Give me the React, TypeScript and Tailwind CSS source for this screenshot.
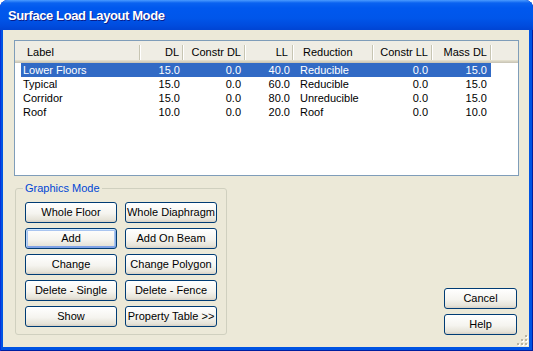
import React from "react";

const rows = [
  ["Lower Floors", "15.0", "0.0", "40.0", "Reducible", "0.0", "15.0"],
  ["Typical", "15.0", "0.0", "60.0", "Reducible", "0.0", "15.0"],
  ["Corridor", "15.0", "0.0", "80.0", "Unreducible", "0.0", "15.0"],
  ["Roof", "10.0", "0.0", "20.0", "Roof", "0.0", "10.0"],
];

const sep =
  "relative after:absolute after:right-0 after:top-[4px] after:bottom-[3px] after:w-px after:bg-[#C7C5B2] after:shadow-[1px_0_0_#ffffff]";

function Btn({ label, focus }: { label: string; focus?: boolean }) {
  return (
    <div
      className={
        "h-[21px] flex items-center justify-center rounded-[3px] border border-[#003C74] text-[11px] text-black whitespace-nowrap bg-[linear-gradient(to_bottom,#FFFFFF,#F5F4EF_55%,#E6E3D8_88%,#D6D0C5)] " +
        (focus
          ? "shadow-[inset_0_1px_0_#CEE7FF,inset_1px_0_0_#BCD4F6,inset_-1px_0_0_#89ADE4,inset_0_-2px_0_#7FA2E6,inset_0_0_0_2px_#A9C5F0]"
          : "")
      }
    >
      {label}
    </div>
  );
}

export default function App() {
  return (
    <div className="w-[533px] h-[351px] bg-white font-['Liberation_Sans',Arial,sans-serif]">
      <div className="w-[533px] h-[351px] flex flex-col rounded-t-[8px] overflow-hidden bg-[#0054E3] shadow-[inset_1px_0_0_#0831D9,inset_-1px_0_0_#001EA0,inset_0_-1px_0_#001EA0]">
        <div className="h-[30px] shrink-0 flex items-center pl-[8px] bg-[linear-gradient(to_bottom,#4A9BFF_0px,#0A62F0_3px,#0058EE_8px,#0056EA_18px,#004BDD_26px,#0044D3_30px)]">
          <span className="text-white font-bold text-[13px] tracking-[-0.4px] [text-shadow:1px_1px_0_#0A1E8C] mt-[1px]">
            Surface Load Layout Mode
          </span>
        </div>
        <div className="flex-1 flex pl-[3px] pr-[4px] pb-[4px]">
          <div className="relative flex-1 bg-[#ECE9D8] flex flex-col pt-[10px] pl-[11px] pr-[10px] pb-[12px]">
            {/* List view */}
            <div className="w-[505px] h-[136px] border border-[#7F9DB9] bg-white text-[11px] text-black overflow-hidden">
              <div className="h-[22px] flex bg-[#EFEDE4] shadow-[inset_0_-1px_0_#CBC7B8,inset_0_-2px_0_#D6D2C2,inset_0_-3px_0_#E2DECD]">
                <div className={"w-[125px] flex items-center pl-[12px] " + sep}>Label</div>
                <div className={"w-[43px] flex items-center justify-end pr-[4px] " + sep}>DL</div>
                <div className={"w-[62px] flex items-center justify-end pr-[4px] " + sep}>Constr DL</div>
                <div className={"w-[48px] flex items-center justify-end pr-[5px] " + sep}>LL</div>
                <div className={"w-[80px] flex items-center pl-[10px] " + sep}>Reduction</div>
                <div className={"w-[59px] flex items-center justify-end pr-[4px] " + sep}>Constr LL</div>
                <div className={"w-[59px] flex items-center justify-end pr-[4px] " + sep}>Mass DL</div>
                <div className="flex-1" />
              </div>
              {rows.map((r, i) => {
                const s = i === 0;
                const cell = s ? "bg-[#316AC5] text-white" : "";
                return (
                  <div key={i} className="h-[14px] flex leading-[14px]">
                    <div className="w-[125px] flex pl-[6px]">
                      <div className={"flex-1 pl-[2px] " + cell}>{r[0]}</div>
                    </div>
                    <div className={"w-[43px] text-right pr-[3px] " + cell}>{r[1]}</div>
                    <div className={"w-[62px] text-right pr-[4px] " + cell}>{r[2]}</div>
                    <div className={"w-[48px] text-right pr-[3px] " + cell}>{r[3]}</div>
                    <div className={"w-[80px] pl-[7px] " + cell}>{r[4]}</div>
                    <div className={"w-[59px] text-right pr-[4px] " + cell}>{r[5]}</div>
                    <div className={"w-[59px] text-right pr-[4px] " + cell}>{r[6]}</div>
                  </div>
                );
              })}
            </div>
            {/* Bottom area */}
            <div className="flex-1 flex mt-[12px] pr-[2px]">
              <div className="relative ml-[1px] w-[212px] h-[147px] border border-[#D0D0BF] rounded-[3px] pt-[13px] pl-[9px]">
                <span className="absolute -top-[7px] left-[7px] px-[2px] bg-[#ECE9D8] text-[11px] leading-[13px] text-[#0046D5]">
                  Graphics Mode
                </span>
                <div className="grid grid-cols-[92px_92px] gap-x-[8px] gap-y-[5px]">
                  <Btn label="Whole Floor" />
                  <Btn label="Whole Diaphragm" />
                  <Btn label="Add" focus />
                  <Btn label="Add On Beam" />
                  <Btn label="Change" />
                  <Btn label="Change Polygon" />
                  <Btn label="Delete - Single" />
                  <Btn label="Delete - Fence" />
                  <Btn label="Show" />
                  <Btn label="Property Table >>" />
                </div>
              </div>
              <div className="flex-1 flex flex-col items-end justify-end gap-[5px]">
                <div className="w-[73px]">
                  <Btn label="Cancel" />
                </div>
                <div className="w-[73px]">
                  <Btn label="Help" />
                </div>
              </div>
            </div>
            <svg className="absolute right-[1px] bottom-[1px]" width="11" height="11" viewBox="0 0 11 11">
              {[
                [8, 8],
                [4, 8],
                [0, 8],
                [8, 4],
                [4, 4],
                [8, 0],
              ].map(([x, y], k) => (
                <g key={k}>
                  <rect x={x + 1} y={y + 1} width="2" height="2" fill="#FFFFFF" />
                  <rect x={x} y={y} width="2" height="2" fill="#B8B4A2" />
                </g>
              ))}
            </svg>
          </div>
        </div>
      </div>
    </div>
  );
}
